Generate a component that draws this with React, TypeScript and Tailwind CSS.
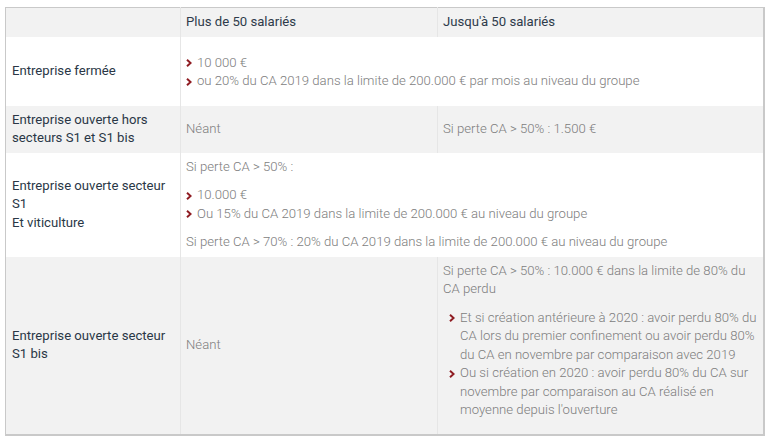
import React from "react";

const Chevron = () => (
  <svg width="6" height="8" viewBox="0 0 6 8" className="inline-block shrink-0" style={{ marginTop: 5.5 }}>
    <path d="M1 0.8 L4.6 4 L1 7.2" fill="none" stroke="#8f1c22" strokeWidth="2" />
  </svg>
);

const Item = ({ children, gap = "gap-[5px]" }: { children: React.ReactNode; gap?: string }) => (
  <li className={`flex ${gap}`}>
    <Chevron />
    <span>{children}</span>
  </li>
);

export default function App() {
  const label = "px-[6px] py-[6px] align-middle text-[#2a3746] font-normal";
  const cell = "px-[5px] py-[6px] align-middle text-[#7d7d7d] font-light border-l border-[#e6e6e6]";
  return (
    <div className="bg-white w-[768px] h-[442px] pt-[7px] pl-[5px]" style={{ fontFamily: "Roboto, 'Noto Sans', sans-serif" }}>
      <table className="table-fixed border-collapse w-[758px] text-[13.15px] leading-[18.5px] border border-[#c9c9c9] border-r-2 border-b-2">
        <colgroup>
          <col style={{ width: 175 }} />
          <col style={{ width: 257 }} />
          <col style={{ width: 326 }} />
        </colgroup>
        <tbody>
          <tr className="bg-[#f2f2f2] h-[29px]">
            <td className={label}></td>
            <td className="px-[5px] align-middle text-[#2e3b4a] font-normal border-l border-[#e6e6e6]">Plus de 50 salariés</td>
            <td className="px-[5px] align-middle text-[#2e3b4a] font-normal border-l border-[#e6e6e6]">Jusqu'à 50 salariés</td>
          </tr>
          <tr className="bg-white">
            <td className={label}>Entreprise fermée</td>
            <td className="px-[5px] pt-[7px] pb-[5px] align-middle text-[#7d7d7d] font-light border-l border-[#e6e6e6]" colSpan={2}>
              <ul className="my-[10px]">
                <Item>10 000 €</Item>
                <Item>ou 20% du CA 2019 dans la limite de 200.000 € par mois au niveau du groupe</Item>
              </ul>
            </td>
          </tr>
          <tr className="bg-[#f2f2f2]">
            <td className="px-[6px] py-[5px] align-middle text-[#2a3746] font-normal">Entreprise ouverte hors secteurs S1 et S1 bis</td>
            <td className={cell}>Néant</td>
            <td className={cell}>Si perte CA &gt; 50% : 1.500 €</td>
          </tr>
          <tr className="bg-white">
            <td className={label}>
              Entreprise ouverte secteur S1
              <br />
              Et viticulture
            </td>
            <td className="px-[5px] pt-[5px] pb-[5px] align-middle text-[#7d7d7d] font-light border-l border-[#e6e6e6]" colSpan={2}>
              <p>Si perte CA &gt; 50% :</p>
              <ul className="my-[10px]">
                <Item>10.000 €</Item>
                <Item>Ou 15% du CA 2019 dans la limite de 200.000 € au niveau du groupe</Item>
              </ul>
              <p>Si perte CA &gt; 70% : 20% du CA 2019 dans la limite de 200.000 € au niveau du groupe</p>
            </td>
          </tr>
          <tr className="bg-[#f2f2f2]">
            <td className={label}>Entreprise ouverte secteur S1 bis</td>
            <td className={cell}>Néant</td>
            <td className="pl-[5px] pr-[2px] pt-[5px] pb-[5px] align-top text-[#7d7d7d] font-light border-l border-[#e6e6e6]">
              <p>Si perte CA &gt; 50% : 10.000 € dans la limite de 80% du CA perdu</p>
              <ul className="mt-[10px] mb-[9px] pl-[6px]">
                <Item gap="gap-[5px]">Et si création antérieure à 2020 : avoir perdu 80% du CA lors du premier confinement ou avoir perdu 80% du CA en novembre par comparaison avec 2019</Item>
                <Item gap="gap-[5px]">Ou si création en 2020 : avoir perdu 80% du CA sur novembre par comparaison au CA réalisé en moyenne depuis l'ouverture</Item>
              </ul>
            </td>
          </tr>
        </tbody>
      </table>
    </div>
  );
}
